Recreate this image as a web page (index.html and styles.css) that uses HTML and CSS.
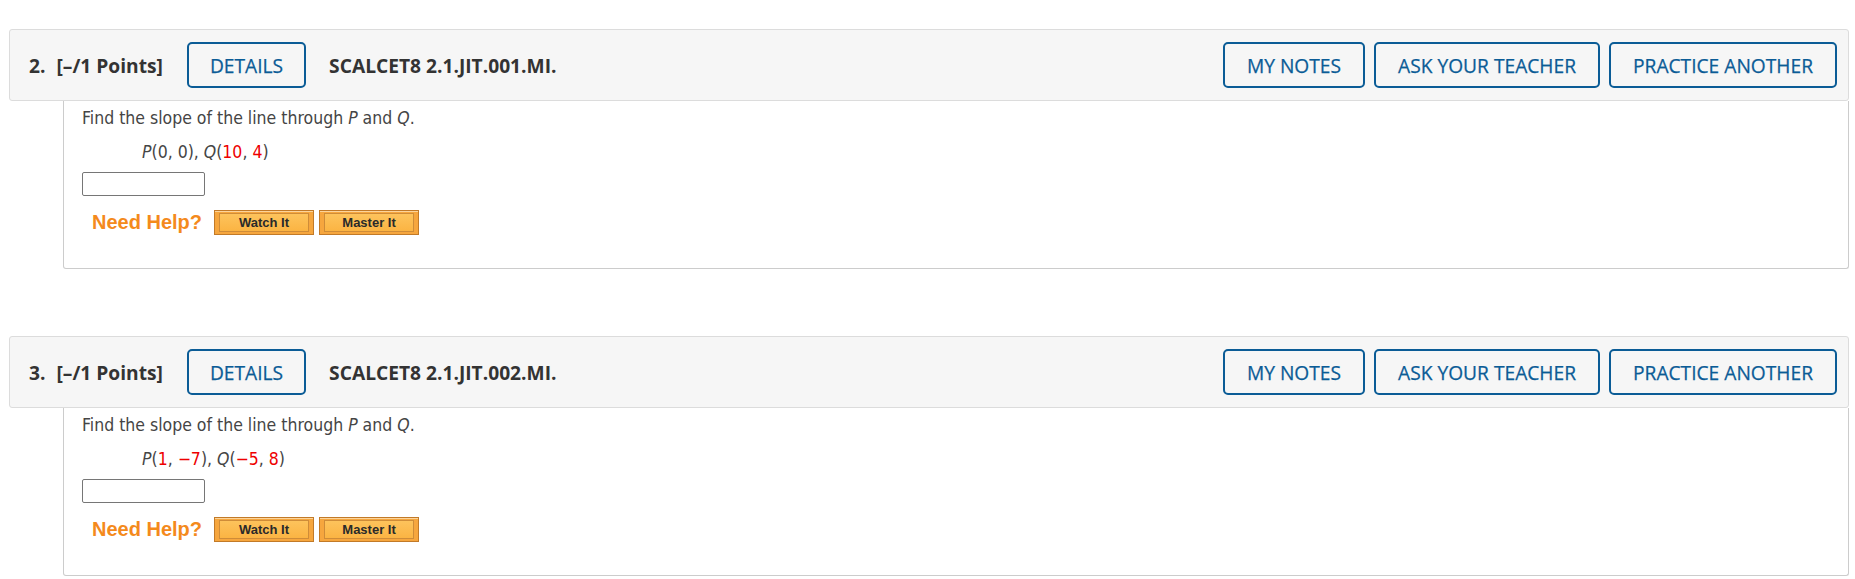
FILE: index.html
```html
<!DOCTYPE html>
<html lang="en">
<head>
<meta charset="utf-8">
<title>Questions</title>
<link rel="stylesheet" href="styles.css">
</head>
<body>
<div class="page">
  <section class="question">
    <div class="qhead">
      <span class="qnum">2.</span>
      <span class="qpts">[&ndash;/1 Points]</span>
      <button class="obtn">DETAILS</button>
      <span class="qid">SCALCET8 2.1.JIT.001.MI.</span>
      <div class="actions">
        <button class="obtn">MY NOTES</button>
        <button class="obtn">ASK YOUR TEACHER</button>
        <button class="obtn">PRACTICE ANOTHER</button>
      </div>
    </div>
    <div class="qbody">
      <p class="prompt">Find the slope of the line through <i>P</i> and <i>Q</i>.</p>
      <p class="math"><i>P</i>(0, 0), <i>Q</i>(<span class="r">10</span>, <span class="r">4</span>)</p>
      <input class="answer" type="text">
      <div class="help">
        <span class="need">Need Help?</span>
        <span class="hbtn"><span class="hin">Watch It</span></span>
        <span class="hbtn"><span class="hin">Master It</span></span>
      </div>
    </div>
  </section>

  <section class="question next">
    <div class="qhead">
      <span class="qnum">3.</span>
      <span class="qpts">[&ndash;/1 Points]</span>
      <button class="obtn">DETAILS</button>
      <span class="qid">SCALCET8 2.1.JIT.002.MI.</span>
      <div class="actions">
        <button class="obtn">MY NOTES</button>
        <button class="obtn">ASK YOUR TEACHER</button>
        <button class="obtn">PRACTICE ANOTHER</button>
      </div>
    </div>
    <div class="qbody">
      <p class="prompt">Find the slope of the line through <i>P</i> and <i>Q</i>.</p>
      <p class="math"><i>P</i>(<span class="r">1</span>, <span class="r">&minus;7</span>), <i>Q</i>(<span class="r">&minus;5</span>, <span class="r">8</span>)</p>
      <input class="answer" type="text">
      <div class="help">
        <span class="need">Need Help?</span>
        <span class="hbtn"><span class="hin">Watch It</span></span>
        <span class="hbtn"><span class="hin">Master It</span></span>
      </div>
    </div>
  </section>
</div>
</body>
</html>
```

FILE: styles.css
```css
html, body {
  margin: 0;
  padding: 0;
  background: #ffffff;
}

.page {
  padding: 29px 6px 0 9px;
}

.question.next {
  margin-top: 67px;
}

.qhead {
  display: flex;
  align-items: center;
  height: 72px;
  box-sizing: border-box;
  border: 1px solid #dcdcdc;
  border-radius: 3px;
  background: #f6f6f6;
  padding: 0 11px 0 19px;
  font-family: "Open Sans", "Noto Sans", sans-serif;
  font-size: 19.2px;
  color: #333333;
}

.qnum {
  font-weight: 700;
  margin-right: 11px;
}

.qpts {
  font-weight: 700;
  margin-right: 24px;
}

.qid {
  font-weight: 700;
  margin-left: 23px;
}

.actions {
  margin-left: auto;
  display: flex;
  gap: 9px;
}

.obtn {
  height: 46px;
  box-sizing: border-box;
  padding: 0 21px;
  border: 2px solid #0b5c96;
  border-radius: 5px;
  background: transparent;
  color: #0b5c96;
  font-family: "Open Sans", "Noto Sans", sans-serif;
  font-size: 19.2px;
  font-weight: 400;
  -webkit-text-stroke: 0.25px #0b5c96;
  white-space: nowrap;
  cursor: pointer;
}

.actions .obtn {
  padding: 0 22px;
}

.qbody {
  margin-left: 54px;
  border: 1px solid #cccccc;
  border-top: 0;
  border-radius: 0 0 3px 3px;
  padding: 7px 18px 33px;
  font-family: "DejaVu Sans Condensed", "DejaVu Sans", sans-serif;
  font-stretch: condensed;
  font-size: 17.5px;
  color: #454545;
}

.prompt {
  margin: 0;
  line-height: 20px;
}

.math {
  margin: 14px 0 0 60px;
  line-height: 20px;
}

.r {
  color: #ee0000;
}

.answer {
  display: block;
  margin: 10px 0 0 0;
  width: 123px;
  height: 24px;
  box-sizing: border-box;
  border: 1px solid #767676;
  border-radius: 2px;
  padding: 0 4px;
  background: #ffffff;
}

.help {
  display: flex;
  align-items: center;
  gap: 5px;
  margin-top: 14px;
  padding-left: 10px;
  height: 25px;
}

.need {
  font-family: "Liberation Sans", Arial, sans-serif;
  font-weight: 700;
  font-size: 20px;
  color: #f48a1c;
  margin-right: 7px;
}

.hbtn {
  display: block;
  width: 100px;
  height: 25px;
  box-sizing: border-box;
  border: 1px solid #c27a28;
  background: #f6a63e;
  box-shadow: inset 0 1px 0 #fcd49a;
  padding: 2px 4px;
}

.hin {
  display: flex;
  align-items: center;
  justify-content: center;
  height: 100%;
  box-sizing: border-box;
  border: 1px solid #cf8c38;
  background: linear-gradient(#fdc35c, #fbb443);
  font-family: "Liberation Sans", Arial, sans-serif;
  font-weight: 700;
  font-size: 13px;
  color: #2a2a2a;
}
```
